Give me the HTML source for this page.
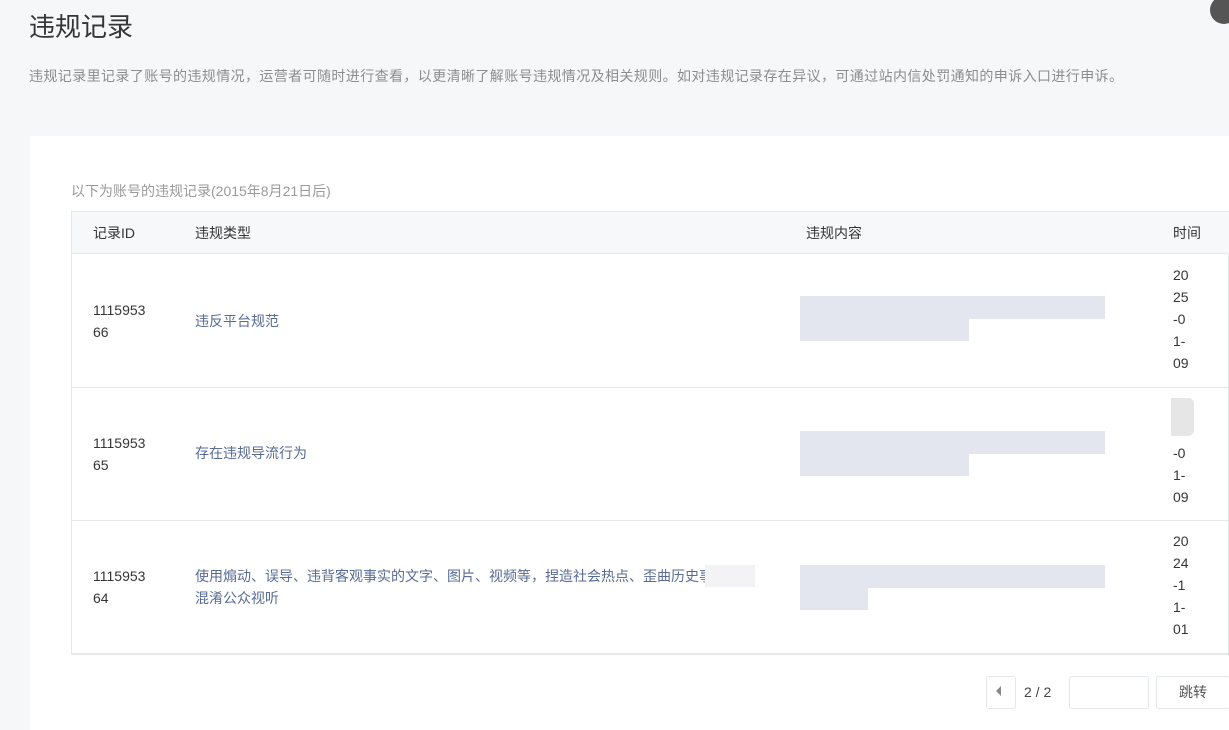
<!DOCTYPE html>
<html><head><meta charset="utf-8"><style>
body{margin:0;width:1229px;height:730px;background:#f6f7f9;font-family:"Liberation Sans","Noto Sans CJK SC",sans-serif;position:relative;overflow:hidden;color:#353535}
.a{position:absolute}
.t{font-size:14px;line-height:22px}
.lnk{color:#576b95}
.line{position:absolute;left:71px;width:1157px;height:1px;background:#e4e8eb}
.blk{position:absolute;background:#e3e6ee}
</style></head><body>
<div class="a" style="left:29px;top:7px;font-size:26px;color:#353535">违规记录</div>
<div class="a" style="left:1210px;top:-4px;width:28px;height:28px;border-radius:50%;background:#555"></div>
<div class="a" style="left:29px;top:66px;font-size:14px;letter-spacing:0.4px;color:#8d8d8d;white-space:nowrap">违规记录里记录了账号的违规情况，运营者可随时进行查看，以更清晰了解账号违规情况及相关规则。如对违规记录存在异议，可通过站内信处罚通知的申诉入口进行申诉。</div>
<div class="a" style="left:30px;top:136px;width:1199px;height:594px;background:#fff"></div>
<div class="a" style="left:71px;top:181px;font-size:14px;color:#9a9a9a">以下为账号的违规记录(2015年8月21日后)</div>
<div class="a" style="left:71px;top:211px;width:1157px;height:42px;background:#f6f8f9;border:1px solid #e4e8eb;border-bottom:none"></div>
<div class="a" style="left:71px;top:254px;width:1156px;height:400px;border:1px solid #e4e8eb;border-top:none"></div>
<div class="line" style="top:253px"></div>
<div class="line" style="top:387px"></div>
<div class="line" style="top:520px"></div>
<div class="line" style="top:653px"></div>
<div class="a t" style="left:93px;top:222px">记录ID</div>
<div class="a t" style="left:195px;top:222px">违规类型</div>
<div class="a t" style="left:806px;top:222px">违规内容</div>
<div class="a t" style="left:1173px;top:222px">时间</div>

<div class="a t" style="left:93px;top:299px">1115953<br>66</div>
<div class="a t lnk" style="left:195px;top:310px">违反平台规范</div>
<div class="a t" style="left:1173px;top:264px">20<br>25<br>-0<br>1-<br>09</div>
<div class="blk" style="left:800px;top:296px;width:305px;height:23px"></div>
<div class="blk" style="left:800px;top:319px;width:169px;height:22px"></div>

<div class="a t" style="left:93px;top:432px">1115953<br>65</div>
<div class="a t lnk" style="left:195px;top:442px">存在违规导流行为</div>
<div class="a" style="left:1171px;top:398px;width:23px;height:38px;background:#e6e6e6;border-radius:0 6px 6px 0"></div>
<div class="a t" style="left:1173px;top:442px">-0<br>1-<br>09</div>
<div class="blk" style="left:800px;top:431px;width:305px;height:23px"></div>
<div class="blk" style="left:800px;top:454px;width:169px;height:22px"></div>

<div class="a t" style="left:93px;top:565px">1115953<br>64</div>
<div class="a t lnk" style="left:195px;top:565px;white-space:nowrap">使用煽动、误导、违背客观事实的文字、图片、视频等，捏造社会热点、歪曲历史事件<br>混淆公众视听</div>
<div class="a" style="left:705px;top:565px;width:50px;height:22px;background:#f3f3f5"></div>
<div class="a t" style="left:1173px;top:530px">20<br>24<br>-1<br>1-<br>01</div>
<div class="blk" style="left:800px;top:565px;width:305px;height:23px"></div>
<div class="blk" style="left:800px;top:588px;width:68px;height:22px"></div>

<div class="a" style="left:986px;top:676px;width:28px;height:31px;border:1px solid #e4e8eb;border-radius:3px;background:#fff"></div>
<div class="a" style="left:996px;top:686px;width:0;height:0;border-top:5px solid transparent;border-bottom:5px solid transparent;border-right:5px solid #888"></div>
<div class="a t" style="left:1024px;top:681px;color:#444">2 / 2</div>
<div class="a" style="left:1069px;top:676px;width:78px;height:31px;border:1px solid #e4e8eb;border-radius:3px;background:#fff"></div>
<div class="a" style="left:1156px;top:676px;width:72px;height:31px;border:1px solid #e4e8eb;border-radius:3px;background:#fff;font-size:14px;line-height:31px;text-align:center;color:#555">跳转</div>
</body></html>
